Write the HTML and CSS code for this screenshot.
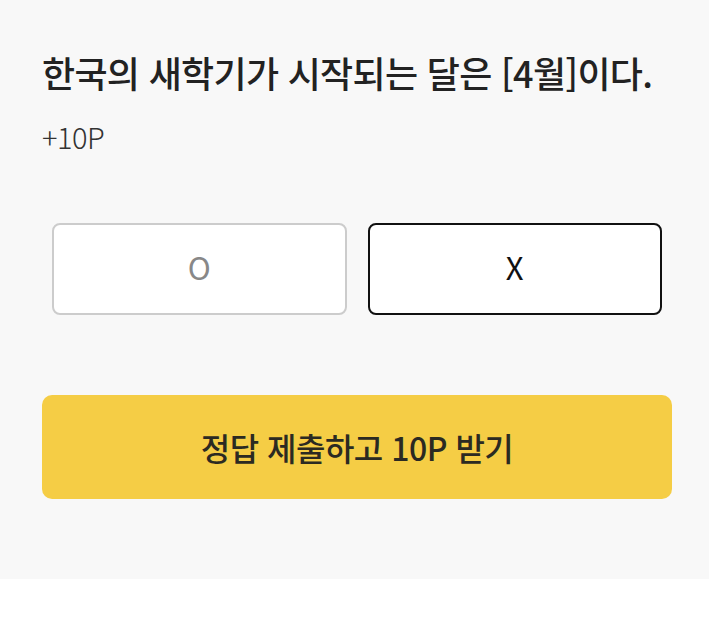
FILE: index.html
```html
<!DOCTYPE html>
<html lang="ko">
<head>
<meta charset="utf-8">
<link rel="stylesheet" href="styles.css">
</head>
<body>
<section class="quiz">
  <h1 class="question">한국의 새학기가 시작되는 달은 [4월]이다.</h1>
  <p class="reward">+10P</p>
  <div class="options">
    <button class="option">O</button>
    <button class="option selected">X</button>
  </div>
  <button class="submit">정답 제출하고 10P 받기</button>
</section>
</body>
</html>
```
FILE: styles.css
```css
html, body {
  margin: 0;
  padding: 0;
  background: #ffffff;
}
body {
  font-family: "Noto Sans CJK KR", "Noto Sans", sans-serif;
}
.quiz {
  background: #f8f8f8;
  padding: 46px 37px 80px 42px;
  display: flex;
  flex-direction: column;
}
.question {
  margin: 0;
  font-size: 36px;
  font-weight: 500;
  line-height: 52px;
  color: #222;
  letter-spacing: -0.7px;
  white-space: nowrap;
}
.reward {
  margin: 21px 0 0;
  font-size: 29px;
  font-weight: 300;
  line-height: 34px;
  color: #333;
  letter-spacing: -0.5px;
}
.options {
  display: flex;
  gap: 21px;
  margin: 70px 10px 0;
}
.option {
  flex: 1;
  height: 92px;
  background: #fff;
  border: 2px solid #cccccc;
  border-radius: 8px;
  font-family: "Noto Sans CJK KR", "Noto Sans", sans-serif;
  font-size: 31px;
  font-weight: 400;
  color: #888;
  padding: 0 0 6px;
}
.option.selected {
  border-color: #111;
  color: #111;
}
.submit {
  margin-top: 80px;
  height: 104px;
  background: #f5cd45;
  border: none;
  border-radius: 10px;
  font-family: "Noto Sans CJK KR", "Noto Sans", sans-serif;
  font-size: 32px;
  font-weight: 500;
  color: #2b2a22;
  letter-spacing: -0.5px;
  padding: 0;
}
```
